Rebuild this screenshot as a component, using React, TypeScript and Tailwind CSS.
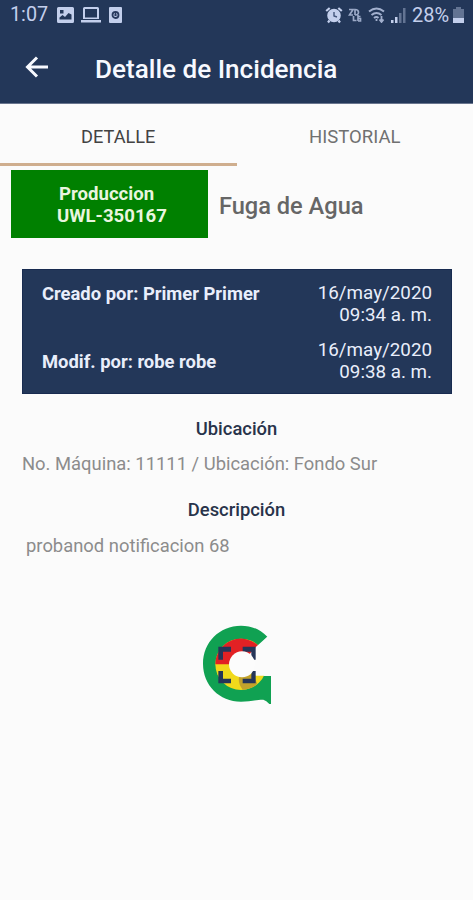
import type { ReactNode } from "react";

function StatusBar() {
  return (
    <div className="flex h-[30px] items-center justify-between pl-[10px] pr-[9px] text-[#c3cfec]">
      <div className="flex items-center">
        <span className="w-[47px] text-[19.800px] leading-[30px] whitespace-nowrap">1:07</span>
        <svg className="h-[16px] w-[17px]" viewBox="0 0 17 16" fill="currentColor">
          <path fillRule="evenodd" d="M1.5 0h14A1.5 1.5 0 0 1 17 1.5v13a1.5 1.5 0 0 1-1.500 1.500h-14A1.500 1.500 0 0 1 0 14.500v-13A1.500 1.500 0 0 1 1.500 0ZM2.500 12.500h12V7.500l-3-1.500-3.500 4-2.500-2-3 2.500ZM3 3v3.500h3.500V3Z" />
        </svg>
        <svg className="ml-[7px] h-[16px] w-[20px]" viewBox="0 0 20 16" fill="currentColor">
          <path fillRule="evenodd" d="M3.500 0h13A1.500 1.500 0 0 1 18 1.500V12H2V1.500A1.500 1.500 0 0 1 3.500 0ZM4 2v8.500h12V2ZM0 13h20v2.500H0Z" />
        </svg>
        <svg className="ml-[8px] h-[16px] w-[13px]" viewBox="0 0 13 16">
          <rect width="13" height="16" rx="1" fill="currentColor" />
          <circle cx="6.500" cy="8" r="3" fill="none" stroke="#293a5e" strokeWidth="1.800" />
          <path d="M6.500 5v4M5 8h3" stroke="#293a5e" strokeWidth="1.200" />
        </svg>
      </div>
      <div className="flex items-center">
        <svg className="h-[18px] w-[18px]" viewBox="0 0 18 18" fill="none" stroke="currentColor">
          <circle cx="9" cy="9.500" r="5.800" fill="#c3cfec" strokeWidth="2" />
          <path d="m1.200 5 3.500-3M16.800 5l-3.500-3M4.500 14.500 3 16.500M13.500 14.500l1.500 2" strokeWidth="2.200" />
          <path d="M9 6v4l3 1" stroke="#42547a" strokeWidth="1.400" />
        </svg>
        <svg className="ml-[5px] h-[16px] w-[14px] opacity-75" viewBox="0 0 14 16" fill="none" stroke="currentColor" strokeWidth="1.700">
          <path d="M1 2.500h4L1.500 8H5M7 8V2.500q3.500 0 3.500 2.800T7 8M5.500 9v4.500h3M10 8v6M12.500 9.500H10v2h2.500V14H10" />
        </svg>
        <svg className="ml-[6px] h-[16px] w-[18px] opacity-80" viewBox="0 0 18 16" fill="none" stroke="currentColor" strokeWidth="2">
          <path d="M1 4.500q7.500-6 15 0M3.500 8q5-4 10 0M6 11q2.500-2 4.500 0" />
          <path d="M8.500 12v2M13.500 9v6M11.500 12.500l2 2.500 2-2.500" strokeWidth="1.800" />
        </svg>
        <svg className="ml-[5px] h-[15px] w-[15px]" viewBox="0 0 15 15" fill="currentColor">
          <path d="M0 12h2.500v3H0ZM4 9h2.500v6H4Z" />
          <path d="M8 5h2.500v10H8ZM12 0h2.500v15H12Z" opacity=".4" />
        </svg>
        <span className="ml-[6px] w-[38px] text-[20px] leading-[30px] whitespace-nowrap">28%</span>
        <svg className="ml-[3px] h-[16px] w-[11px]" viewBox="0 0 11 16" fill="currentColor">
          <path d="M3 0h5v2h3v9H0V2h3Z" opacity=".4" />
          <path d="M0 11h11v5H0Z" />
        </svg>
      </div>
    </div>
  );
}

function Entry({ label, date, time }: { label: ReactNode; date: string; time: string }) {
  return (
    <div className="flex justify-between text-[#e9eefb]">
      <span className="text-[18.400px] leading-[21px] font-bold whitespace-nowrap">{label}</span>
      <div className="text-right text-[18.800px] leading-[21.500px] whitespace-nowrap">
        <div>{date}</div>
        <div>{time}</div>
      </div>
    </div>
  );
}

function Logo() {
  return (
    <svg className="ml-[190px] h-[105px] w-[100px]" viewBox="0 0 300 315">
      <path fill="#10a152" d="M232 77C208 53 182 44 153 44C88 44 39 94 39 158S88 272 153 272C180 272 206 265 220 266Q229 268 238 279H243V195H185L155 158Z" />
      <circle cx="153" cy="160" r="77" fill="#f1d91b" />
      <path d="M76 160A77 77 0 0 1 208 106L153 160Z" fill="#e22124" />
      <path d="M148 196Q142 215 158 236Q184 235 202 219L190 190Z" fill="#c3a32b" />
      <path d="M153 160 195 110 232 77 245 72V194H197Z" fill="#fbfbfb" />
      <path d="M85 107H123V122H99V146H85ZM158 107H197V146H184V122H158ZM85 180H99V203H123V217H85ZM184 180H197V217H158V203H184Z" fill="#253558" />
      <circle cx="156" cy="160" r="39" fill="#fcfcfc" />
    </svg>
  );
}

export default function App() {
  return (
    <div className="flex h-[900px] w-[473px] flex-col overflow-hidden bg-[#fbfbfb] font-[Roboto,sans-serif]">
      <header className="h-[104px] border-b border-[#69758e] bg-[#233759]">
        <StatusBar />
        <div className="flex h-[73px] items-center pl-[25px] text-[#f7f9ff]">
          <svg className="mt-[1px] h-[22px] w-[23px]" viewBox="0 0 23 22" fill="none" stroke="currentColor" strokeWidth="3">
            <path d="M23 11H3M12 1.500 2.500 11l9.500 9.500" />
          </svg>
          <h1 className="mt-[5px] ml-[47px] text-[26.100px] leading-[32px] font-medium whitespace-nowrap">Detalle de Incidencia</h1>
        </div>
      </header>
      <nav className="grid h-[62px] grid-cols-2 text-center leading-[65px]">
        <div className="h-[62px] border-b-[3px] border-[#cfae8e] text-[18.200px] text-[#424242]">DETALLE</div>
        <div className="h-[62px] text-[18.500px] leading-[66px] text-[#707070]">HISTORIAL</div>
      </nav>
      <main className="pt-[4px]">
        <div className="flex h-[68px] items-center pl-[11px]">
          <div className="flex h-[68px] w-[197px] flex-col justify-center bg-[#008000] pt-[3px] text-[18.600px] leading-[21.500px] font-bold whitespace-nowrap text-[#e9f5df]">
            <span className="pl-[48px]">Produccion</span>
            <span className="pl-[46px]">UWL-350167</span>
          </div>
          <h2 className="mt-[3px] ml-[11px] text-[23.600px] leading-[30px] font-medium whitespace-nowrap text-[#666]">Fuga de Agua</h2>
        </div>
        <section className="mt-[31px] mr-[21px] ml-[22px] flex h-[125px] flex-col gap-[14px] border border-[#182b50] bg-[#233759] pt-[13px] pr-[19px] pl-[19px]">
          <Entry label="Creado por: Primer Primer" date="16/may/2020" time="09:34 a. m." />
          <Entry label={<span className="inline-block pt-[11px]">Modif. por: robe robe</span>} date="16/may/2020" time="09:38 a. m." />
        </section>
        <h3 className="mt-[23px] text-center text-[18.400px] leading-[24px] font-medium text-[#28334a]">Ubicación</h3>
        <p className="mt-[11px] pl-[22px] text-[18.400px] leading-[24px] whitespace-nowrap text-[#8c8c8c]">No. Máquina: 11111 / Ubicación: Fondo Sur</p>
        <h3 className="mt-[22px] text-center text-[18.400px] leading-[24px] font-medium text-[#28334a]">Descripción</h3>
        <p className="mt-[12px] mb-[53px] pl-[26px] text-[18.400px] leading-[24px] whitespace-nowrap text-[#8c8c8c]">probanod notificacion 68</p>
        <Logo />
      </main>
    </div>
  );
}
